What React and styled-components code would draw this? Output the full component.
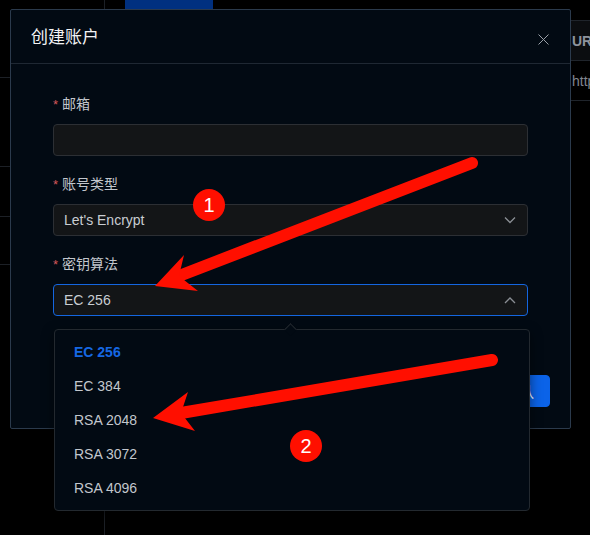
import React from 'react';
import styled, { createGlobalStyle } from 'styled-components';

const GlobalStyle = createGlobalStyle`
  html, body {
    margin: 0;
    padding: 0;
    background: #000;
  }
  body {
    font-family: "Liberation Sans", "Noto Sans CJK SC", sans-serif;
    font-size: 14px;
  }
`;

const Page = styled.div`
  position: relative;
  width: 590px;
  height: 535px;
  overflow: hidden;
  background: #000;
  display: flex;
`;

const Sidebar = styled.div`
  width: 104px;
  flex-shrink: 0;
  border-right: 1px solid #1c2026;
  display: flex;
  flex-direction: column;
`;

const SideItem = styled.div`
  height: ${p => p.h}px;
  border-bottom: 1px solid #1c2026;
  box-sizing: border-box;
`;

const Main = styled.div`
  flex: 1;
  display: flex;
  flex-direction: column;
`;

const TopBar = styled.div`
  height: 20px;
  padding-left: 20px;
  display: flex;
  align-items: flex-start;
`;

const TabBlock = styled.div`
  width: 88px;
  height: 9px;
  background: #003080;
`;

const TableRow = styled.div`
  height: 40px;
  border-top: 1px solid #1f242b;
  box-sizing: border-box;
  display: flex;
  align-items: center;
  justify-content: flex-end;
  background: ${p => (p.head ? '#0b0d10' : 'transparent')};
  color: ${p => (p.head ? '#8d939c' : '#80868f')};
  font-weight: ${p => (p.head ? 700 : 400)};
  font-size: 14px;
`;

const Cell = styled.span`
  width: 18px;
  overflow: hidden;
  white-space: nowrap;
`;

const Modal = styled.div`
  position: absolute;
  left: 10px;
  top: 9px;
  width: 561px;
  box-sizing: border-box;
  background: #020a13;
  border: 1px solid #2b3a4c;
  border-radius: 2px;
  display: flex;
  flex-direction: column;
`;

const ModalHeader = styled.div`
  height: 54px;
  box-sizing: border-box;
  border-bottom: 1px solid #1f2833;
  padding: 0 20px;
  display: flex;
  align-items: center;
  justify-content: space-between;
`;

const Title = styled.div`
  color: #f2f3f5;
  font-size: 17px;
  margin-top: -2px;
`;

const Close = styled.button`
  background: none;
  border: none;
  padding: 0;
  margin-top: 5px;
  margin-right: 0;
  width: 14px;
  height: 14px;
  display: flex;
  align-items: center;
  justify-content: center;
  cursor: pointer;
`;

const ModalBody = styled.div`
  padding: 29px 42px 0 42px;
  display: flex;
  flex-direction: column;
`;

const FormItem = styled.div`
  display: flex;
  flex-direction: column;
  margin-bottom: 17px;
`;

const Label = styled.label`
  height: 22px;
  line-height: 22px;
  margin-bottom: 9px;
  color: #c2c6cc;
  font-size: 14px;
  display: flex;
  align-items: center;
`;

const Star = styled.span`
  color: #d3575a;
  font-family: "Liberation Sans", sans-serif;
  font-size: 13px;
  margin-right: 4px;
  margin-top: 1px;
`;

const Field = styled.div`
  height: 32px;
  box-sizing: border-box;
  background: #131517;
  border: 1px solid ${p => (p.focused ? '#1466e0' : '#2c2f34')};
  border-radius: 4px;
  padding: 0 11px 0 10px;
  display: flex;
  align-items: center;
  justify-content: space-between;
  color: #c9cdd2;
  font-size: 14px;
`;

const Footer = styled.div`
  display: flex;
  justify-content: flex-end;
  gap: 8px;
  padding: 42px 20px 21px;
`;

const Button = styled.button`
  height: 32px;
  padding: 0 15px;
  border-radius: 4px;
  font-family: inherit;
  font-size: 14px;
  border: 1px solid ${p => (p.primary ? '#0b63e8' : '#3a3f46')};
  background: ${p => (p.primary ? '#0b63e8' : 'transparent')};
  color: #fff;
`;

const Dropdown = styled.div`
  position: absolute;
  left: 54px;
  top: 329px;
  width: 476px;
  box-sizing: border-box;
  background: #020a13;
  border: 1px solid #23292f;
  border-radius: 4px;
  padding: 5px 0 5px;
  box-shadow: 0 4px 12px rgba(0, 0, 0, 0.5);
`;

const Caret = styled.div`
  position: absolute;
  top: -5px;
  left: 231px;
  width: 8px;
  height: 8px;
  background: #020a13;
  border-left: 1px solid #23292f;
  border-top: 1px solid #23292f;
  transform: rotate(45deg);
`;

const Option = styled.div`
  height: 34px;
  line-height: 34px;
  padding-left: 19px;
  font-size: 14px;
  color: ${p => (p.selected ? '#1668e3' : '#c3c7cd')};
  font-weight: ${p => (p.selected ? 700 : 400)};
`;

const Marks = styled.svg`
  position: absolute;
  left: 0;
  top: 0;
  pointer-events: none;
`;

const Chevron = ({ up }) => (
  <svg width="12" height="8" viewBox="0 0 12 8">
    <path
      d={up ? 'M1 7 L6 2 L11 7' : 'M1 1.5 L6 6.5 L11 1.5'}
      fill="none"
      stroke="#8a8e94"
      strokeWidth="1.3"
    />
  </svg>
);

const options = ['EC 256', 'EC 384', 'RSA 2048', 'RSA 3072', 'RSA 4096'];

function Arrow({ tail, tip, top, bottom, notch }) {
  return (
    <g>
      <line
        x1={tail[0]}
        y1={tail[1]}
        x2={notch[0]}
        y2={notch[1]}
        stroke="#ff0f00"
        strokeWidth="12"
        strokeLinecap="round"
      />
      <polygon
        points={[tip, top, notch, bottom].map(p => p.join(',')).join(' ')}
        fill="#ff0f00"
      />
    </g>
  );
}

function Badge({ x, y, n }) {
  return (
    <g>
      <circle cx={x} cy={y} r="16" fill="#ff0f00" />
      <text
        x={x}
        y={y + 7}
        textAnchor="middle"
        fill="#fff"
        fontSize="20"
        fontFamily="Liberation Sans, sans-serif"
      >
        {n}
      </text>
    </g>
  );
}

export default function App() {
  return (
    <>
      <GlobalStyle />
      <Page>
        <Sidebar>
          <SideItem h={78} />
          <SideItem h={89} />
          <SideItem h={50} />
          <SideItem h={48} />
        </Sidebar>
        <Main>
          <TopBar>
            <TabBlock />
          </TopBar>
          <TableRow head>
            <Cell>URL</Cell>
          </TableRow>
          <TableRow>
            <Cell>http</Cell>
          </TableRow>
          <TableRow />
        </Main>

        <Modal>
          <ModalHeader>
            <Title>创建账户</Title>
            <Close aria-label="close">
              <svg width="11" height="11" viewBox="0 0 11 11">
                <path d="M0.5 0.5 L10.5 10.5 M10.5 0.5 L0.5 10.5" stroke="#9aa0a8" strokeWidth="1" />
              </svg>
            </Close>
          </ModalHeader>
          <ModalBody>
            <FormItem>
              <Label><Star>*</Star>邮箱</Label>
              <Field />
            </FormItem>
            <FormItem>
              <Label><Star>*</Star>账号类型</Label>
              <Field>
                Let's Encrypt
                <Chevron />
              </Field>
            </FormItem>
            <FormItem>
              <Label><Star>*</Star>密钥算法</Label>
              <Field focused>
                EC 256
                <Chevron up />
              </Field>
            </FormItem>
          </ModalBody>
          <Footer>
            <Button>取消</Button>
            <Button primary>确认</Button>
          </Footer>
        </Modal>

        <Dropdown>
          <Caret />
          {options.map((o, i) => (
            <Option key={o} selected={i === 0}>{o}</Option>
          ))}
        </Dropdown>

        <Marks width="590" height="535" viewBox="0 0 590 535">
          <Arrow tail={[472, 163]} tip={[155, 286]} top={[184, 255]} notch={[179, 276]} bottom={[198, 291]} />
          <Badge x={209} y={205} n="1" />
          <Arrow tail={[492, 360]} tip={[153, 418]} top={[188, 392]} notch={[181, 413]} bottom={[195, 431]} />
          <Badge x={306} y={446} n="2" />
        </Marks>
      </Page>
    </>
  );
}
